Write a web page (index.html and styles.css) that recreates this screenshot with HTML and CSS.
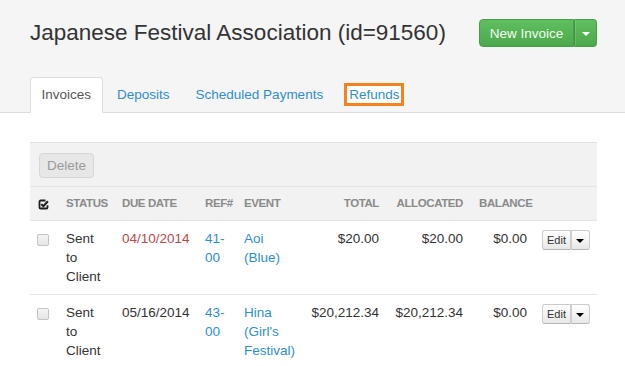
FILE: index.html
```html
<!DOCTYPE html>
<html lang="en">
<head>
    <meta charset="UTF-8">
    <meta name="viewport" content="width=device-width, initial-scale=1.0">
    <title>Invoices</title>
    <link rel="stylesheet" href="styles.css">
</head>
<body>
    <div class="page-head">
        <div class="title-row">
            <h1 class="title">Japanese Festival Association (id=91560)</h1>
            <div class="btn-group">
                <button class="btn-green">New Invoice</button><button class="btn-green btn-green-caret"><span class="caret caret-white"></span></button>
            </div>
        </div>
        <ul class="tabs">
            <li class="tab active"><a>Invoices</a></li>
            <li class="tab"><a>Deposits</a></li>
            <li class="tab"><a>Scheduled Payments</a></li>
            <li class="tab"><a><span class="highlight">Refunds</span></a></li>
        </ul>
    </div>

    <div class="panel">
        <div class="toolbar">
            <button class="btn-delete">Delete</button>
        </div>
        <table class="invoices">
            <colgroup>
                <col class="w-check">
                <col class="w-status">
                <col class="w-date">
                <col class="w-ref">
                <col class="w-event">
                <col class="w-total">
                <col class="w-alloc">
                <col class="w-balance">
                <col class="w-actions">
            </colgroup>
            <thead>
                <tr>
                    <th class="cell-check">
                        <svg class="check-all" width="11" height="11" viewBox="0 0 11 11">
                            <path d="M7.5 1.5H2.6a1.1 1.1 0 0 0-1.1 1.1v5.8a1.1 1.1 0 0 0 1.1 1.1h5.8a1.1 1.1 0 0 0 1.1-1.1V6.2" fill="none" stroke="#1e1e1e" stroke-width="1.8"/>
                            <path d="M3.3 5.1l2 2.1 4.6-5" fill="none" stroke="#1e1e1e" stroke-width="2.1"/>
                        </svg>
                    </th>
                    <th class="cell-status">Status</th>
                    <th>Due Date</th>
                    <th>Ref#</th>
                    <th>Event</th>
                    <th class="num">Total</th>
                    <th class="num">Allocated</th>
                    <th class="num">Balance</th>
                    <th class="cell-actions"></th>
                </tr>
            </thead>
            <tbody>
                <tr>
                    <td class="cell-check"><span class="checkbox"></span></td>
                    <td class="cell-status">Sent to Client</td>
                    <td class="overdue">04/10/2014</td>
                    <td><a class="link">41-00</a></td>
                    <td><a class="link">Aoi (Blue)</a></td>
                    <td class="num">$20.00</td>
                    <td class="num">$20.00</td>
                    <td class="num">$0.00</td>
                    <td class="cell-actions">
                        <div class="btn-group">
                            <button class="btn-small">Edit</button><button class="btn-small btn-small-caret"><span class="caret"></span></button>
                        </div>
                    </td>
                </tr>
                <tr>
                    <td class="cell-check"><span class="checkbox"></span></td>
                    <td class="cell-status">Sent to Client</td>
                    <td>05/16/2014</td>
                    <td><a class="link">43-00</a></td>
                    <td><a class="link">Hina (Girl's Festival)</a></td>
                    <td class="num">$20,212.34</td>
                    <td class="num">$20,212.34</td>
                    <td class="num">$0.00</td>
                    <td class="cell-actions">
                        <div class="btn-group">
                            <button class="btn-small">Edit</button><button class="btn-small btn-small-caret"><span class="caret"></span></button>
                        </div>
                    </td>
                </tr>
            </tbody>
        </table>
    </div>
</body>
</html>
```

FILE: styles.css
```css
* {
    padding: 0;
    margin: 0;
    box-sizing: border-box;
}

:root {
    --text-color: #333333;
    --head-bg: #f5f5f5;
    --panel-bg: #f2f2f2;
    --line-color: #dddddd;
    --link-color: #2f8dd3;
    --muted-color: #8a8a8a;
}

body {
    font-family: "Liberation Sans", Arial, sans-serif;
    font-size: 13.5px;
    color: var(--text-color);
    background-color: #ffffff;
}

/* page header with title and tabs */
.page-head {
    background-color: var(--head-bg);
    border-bottom: 1px solid var(--line-color);
    padding: 19px 28px 0 30px;
}

.title-row {
    display: flex;
    align-items: center;
    justify-content: space-between;
    height: 28px;
}

.title {
    font-size: 22.5px;
    font-weight: normal;
    color: #333333;
    line-height: 28px;
}

.btn-group {
    display: inline-flex;
}

.btn-green {
    font-family: inherit;
    font-size: 13.5px;
    color: #f4fbf4;
    height: 28px;
    width: 95px;
    padding: 0;
    white-space: nowrap;
    background-image: linear-gradient(#5fbf5f, #4ca84c);
    border: 1px solid #47a047;
    border-radius: 4px 0 0 4px;
}

.btn-green-caret {
    width: 23px;
    border-left: 1px solid #3f953f;
    border-radius: 0 4px 4px 0;
    box-shadow: inset 1px 0 0 rgba(255, 255, 255, 0.15);
}

.caret {
    display: inline-block;
    width: 0;
    height: 0;
    border-top: 4px solid #000000;
    border-left: 4px solid transparent;
    border-right: 4px solid transparent;
    vertical-align: middle;
}

.caret-white {
    border-top-color: #ffffff;
}

.tabs {
    display: flex;
    align-items: flex-end;
    list-style: none;
    margin-top: 30px;
}

.tab {
    margin-right: 3px;
    margin-bottom: -1px;
}

.tab a {
    display: block;
    padding: 8px 10.5px;
    line-height: 18px;
    color: var(--link-color);
    border: 1px solid transparent;
    border-radius: 4px 4px 0 0;
}

.tab.active a {
    color: #555555;
    background-color: #ffffff;
    border-color: var(--line-color);
    border-bottom-color: transparent;
}

.highlight {
    display: inline-block;
    vertical-align: top;
    line-height: 17px;
    padding: 0 2px;
    margin: -3px -5px -3px;
    border: 3px solid #f5821f;
    background-color: #ffffff;
}

/* invoices panel */
.panel {
    margin: 29px 28px 0 30px;
}

.toolbar {
    background-color: var(--panel-bg);
    border-top: 1px solid #e2e2e2;
    padding: 10px 9px 8px;
}

.btn-delete {
    font-family: inherit;
    font-size: 13.5px;
    line-height: 17px;
    color: #9a9a9a;
    padding: 3px 7px;
    background-color: #e7e7e7;
    border: 1px solid #d6d6d6;
    border-radius: 4px;
}

.invoices {
    width: 100%;
    table-layout: fixed;
    border-collapse: collapse;
}

.w-check { width: 28px; }
.w-status { width: 56px; }
.w-date { width: 83px; }
.w-ref { width: 39px; }
.w-event { width: 64px; }
.w-total { width: 87px; }
.w-alloc { width: 84px; }
.w-balance { width: 64px; }
.w-actions { width: 62px; }

.invoices th,
.invoices td {
    padding: 8px 4px 8px 8px;
    text-align: left;
    vertical-align: top;
    line-height: 19px;
}

.invoices th {
    background-color: var(--panel-bg);
    border-top: 1px solid #e4e4e4;
    border-bottom: 1px solid #e4e4e4;
    font-weight: bold;
    font-size: 11.5px;
    letter-spacing: -0.4px;
    text-transform: uppercase;
    color: var(--muted-color);
    line-height: 17px;
}

.invoices td {
    border-bottom: 1px solid #e5e5e5;
    font-size: 13.5px;
}

.invoices .num {
    text-align: right;
    padding-right: 8px;
}

.invoices .cell-check {
    padding-left: 7px;
}

.invoices .cell-status {
    padding-right: 8px;
}

.invoices .cell-actions {
    padding-left: 7px;
    padding-top: 9px;
}

.check-all {
    display: block;
    margin-top: 4px;
    margin-left: 1px;
}

.checkbox {
    display: block;
    width: 12px;
    height: 12px;
    margin-top: 5px;
    border: 1px solid #c4c4c4;
    border-radius: 2px;
    background-image: linear-gradient(#f4f4f4, #e6e6e6);
}

.overdue {
    color: #b94a48;
}

.link {
    color: var(--link-color);
}

.btn-small {
    font-family: inherit;
    font-size: 11px;
    line-height: 14px;
    color: #333333;
    height: 20px;
    padding: 2px 4px;
    background-image: linear-gradient(#ffffff, #e8e8e8);
    border: 1px solid #cccccc;
    border-bottom-color: #b5b5b5;
    border-radius: 3px 0 0 3px;
}

.btn-small-caret {
    width: 19px;
    padding: 0;
    border-left: 1px solid #d0d0d0;
    border-radius: 0 3px 3px 0;
}
```
